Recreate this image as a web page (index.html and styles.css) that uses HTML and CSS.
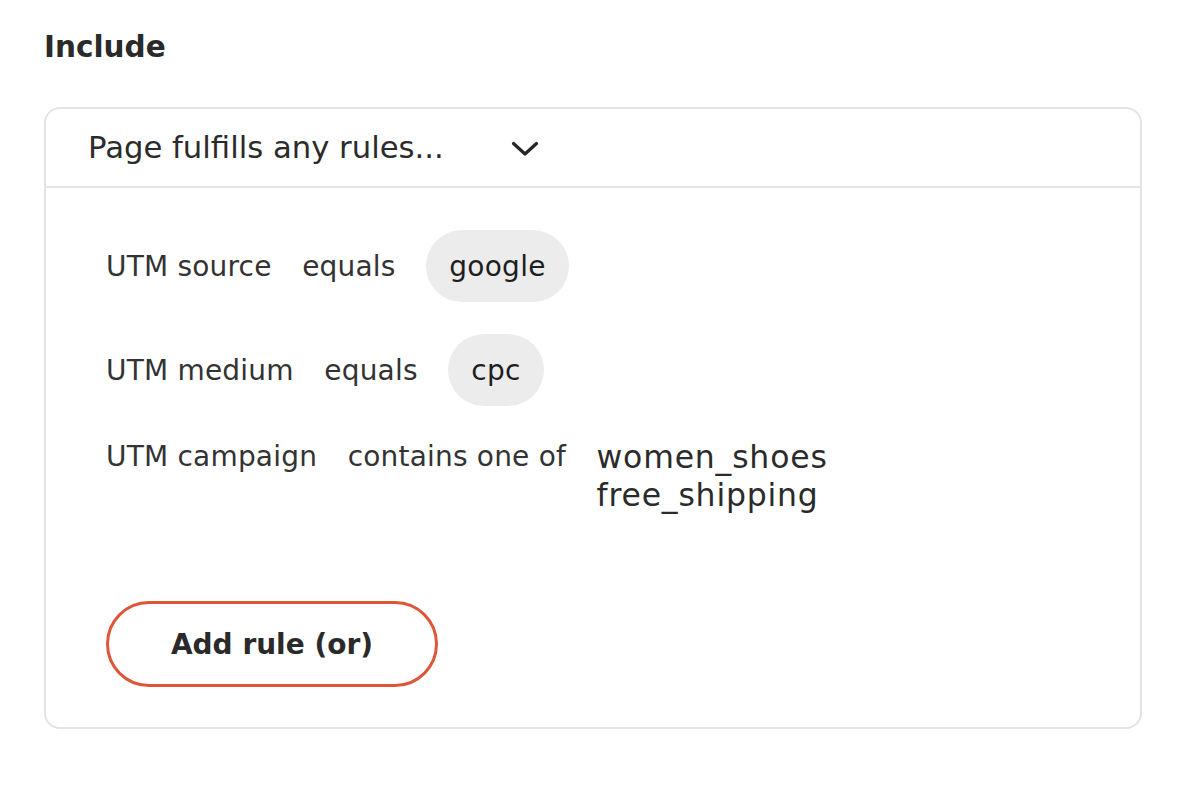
FILE: index.html
```html
<!DOCTYPE html>
<html lang="en">
<head>
<meta charset="utf-8">
<title>Include rules</title>
<link rel="stylesheet" href="styles.css">
</head>
<body>
<main class="page">
  <h2 class="title">Include</h2>
  <section class="card">
    <div class="card-head">
      <span class="mode">Page fulfills any rules...</span>
      <svg class="chevron" width="28" height="16" viewBox="0 0 28 16" aria-hidden="true">
        <path d="M2.5 2.5 L14 13 L25.5 2.5" fill="none" stroke="#262626" stroke-width="3.2" stroke-linecap="round" stroke-linejoin="round"/>
      </svg>
    </div>
    <div class="card-body">
      <div class="rule">
        <span class="field">UTM source</span>
        <span class="op">equals</span>
        <span class="chip">google</span>
      </div>
      <div class="rule">
        <span class="field">UTM medium</span>
        <span class="op">equals</span>
        <span class="chip">cpc</span>
      </div>
      <div class="rule rule-top">
        <span class="field">UTM campaign</span>
        <span class="op">contains one of</span>
        <div class="values">
          <span>women_shoes</span>
          <span>free_shipping</span>
        </div>
      </div>
      <button class="add-btn" type="button">Add rule (or)</button>
    </div>
  </section>
</main>
</body>
</html>
```
FILE: styles.css
```css
* { box-sizing: border-box; }
html, body { margin: 0; padding: 0; background: #ffffff; }
body {
  font-family: "DejaVu Sans", "Liberation Sans", sans-serif;
  color: #2b2b2b;
}
.page {
  padding: 29px 40px 0 44px;
}
.title {
  margin: 0 0 42px 0;
  font-size: 29.5px;
  line-height: 36px;
  font-weight: 700;
  color: #2a2a2a;
}
.card {
  width: 1098px;
  border: 2px solid #e4e4e8;
  border-radius: 16px;
}
.card-head {
  height: 79px;
  border-bottom: 2px solid #e4e4e8;
  display: flex;
  align-items: center;
  gap: 67px;
  padding-left: 42px;
}
.mode {
  font-size: 30.7px;
  color: #2b2b2b;
}
.chevron { display: block; margin-top: 2px; }
.card-body {
  padding: 42px 0 40px 60px;
  display: flex;
  flex-direction: column;
  align-items: flex-start;
}
.rule {
  display: flex;
  align-items: center;
  gap: 30.5px;
  font-size: 28px;
  color: #333333;
  margin-bottom: 32px;
}
.field, .op { letter-spacing: 0.2px; }
.rule-top {
  align-items: flex-start;
  line-height: 38px;
  margin-bottom: 87px;
}
.chip {
  height: 72px;
  padding: 0 23px;
  border-radius: 36px;
  background: #ececec;
  color: #1e1e1e;
  display: flex;
  align-items: center;
  letter-spacing: 0.3px;
}
.values {
  display: flex;
  flex-direction: column;
  font-size: 31.5px;
  line-height: 38px;
  letter-spacing: 0.8px;
  color: #2b2b2b;
}
.add-btn {
  width: 332px;
  height: 86px;
  border: 3px solid #df5538;
  border-radius: 43px;
  background: #ffffff;
  font-family: "DejaVu Sans", "Liberation Sans", sans-serif;
  font-size: 28px;
  font-weight: 700;
  color: #2a2a2a;
  padding: 0;
}
```
